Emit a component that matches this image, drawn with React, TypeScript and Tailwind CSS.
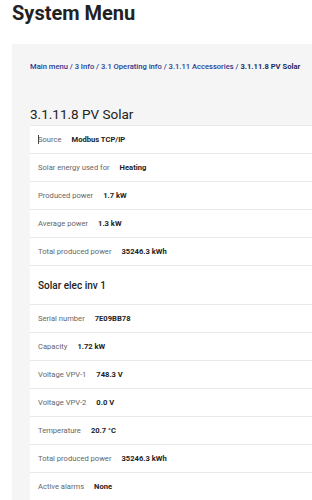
const pvRows: [string, string][] = [
  ["Source", "Modbus TCP/IP"],
  ["Solar energy used for", "Heating"],
  ["Produced power", "1.7 kW"],
  ["Average power", "1.3 kW"],
  ["Total produced power", "35246.3 kWh"],
];

const invRows: [string, string][] = [
  ["Serial number", "7E09BB78"],
  ["Capacity", "1.72 kW"],
  ["Voltage VPV-1", "748.3 V"],
  ["Voltage VPV-2", "0.0 V"],
  ["Temperature", "20.7 °C"],
  ["Total produced power", "35246.3 kWh"],
  ["Active alarms", "None"],
];

function Row({ label, value, caret }: { label: string; value: string; caret?: boolean }) {
  return (
    <div className="flex h-[28px] items-center border-b-[1.5px] border-[#e9e9e9] px-[8px] text-[7.6px]">
      {caret ? <span className="mr-[-1px] h-[9px] w-px bg-[#444]" /> : null}
      <span className="text-[#666]">{label}</span>
      <span className="ml-[10px] font-bold text-[#222]">{value}</span>
    </div>
  );
}

export default function App() {
  return (
    <div className="h-[500px] w-[312px] overflow-hidden bg-white font-['Roboto',sans-serif]">
      <h1 className="px-[12px] text-[20px] font-bold leading-[26px] text-[#222]">
        System Menu
      </h1>
      <div className="ml-[12px] mt-[18px] bg-[#f5f5f5] pl-[18px] pt-[18px]">
        <nav className="text-[7.6px] font-medium leading-[10px] text-[#2a3b8f]">
          Main menu / 3 Info / 3.1 Operating info / 3.1.11 Accessories /{" "}
          <span className="font-bold text-[#1c2b66]">3.1.11.8 PV Solar</span>
        </nav>
        <h2 className="mt-[33px] text-[13.5px] leading-[18px] text-[#222]">3.1.11.8 PV Solar</h2>
        <div className="mt-[2px] border-t border-[#e9e9e9] bg-white">
          {pvRows.map(([l, v], i) => (
            <Row key={l} label={l} value={v} caret={i === 0} />
          ))}
          <div className="flex h-[39px] items-center border-b-[1.5px] border-[#e9e9e9] px-[8px] text-[10px] font-medium text-[#222]">
            Solar elec inv 1
          </div>
          {invRows.map(([l, v], i) => (
            <Row key={l + i} label={l} value={v} />
          ))}
        </div>
      </div>
    </div>
  );
}
